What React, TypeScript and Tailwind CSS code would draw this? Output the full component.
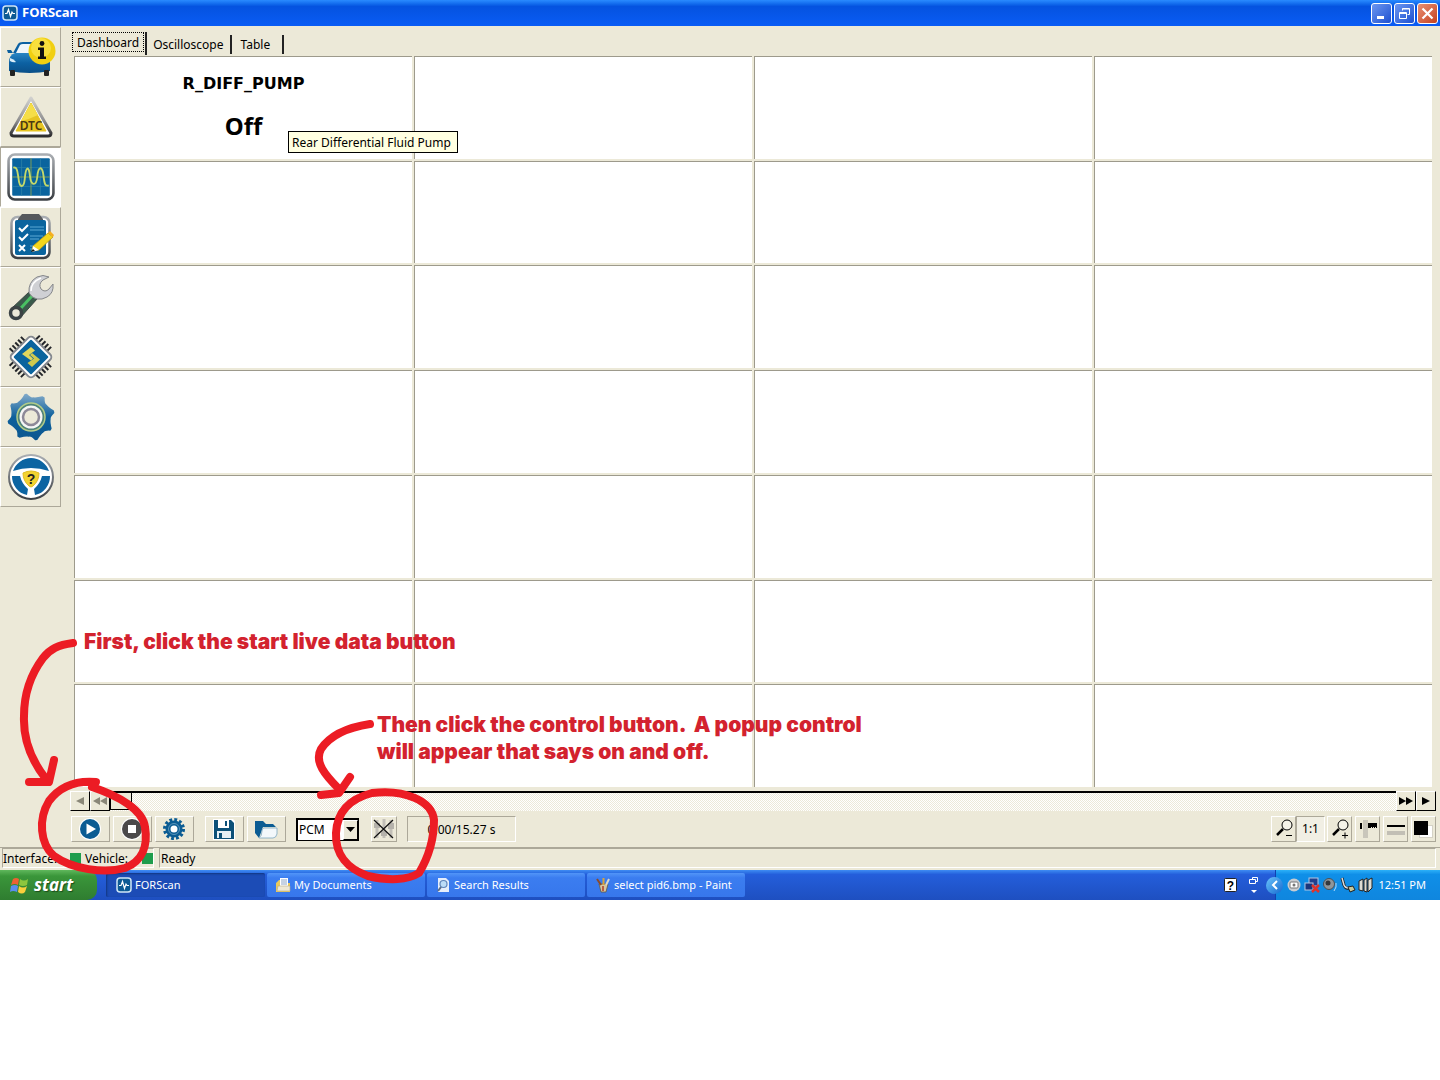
import type { ReactNode } from "react"

const raised = "border border-t-white border-l-white border-r-[#aca899] border-b-[#aca899]"
const sunken = "border border-t-[#aca899] border-l-[#aca899] border-r-white border-b-white"

function CarInfoIcon() {
  return (
    <svg width="50" height="44" viewBox="0 0 50 44">
      <defs>
        <linearGradient id="carBody" x1="0" y1="0" x2="0" y2="1">
          <stop offset="0" stopColor="#2b86c4" />
          <stop offset="0.500" stopColor="#0c61a2" />
          <stop offset="1" stopColor="#0a4f88" />
        </linearGradient>
      </defs>
      <path d="M7 18 L12 9 Q13 7 17 7 H31 Q34 7 36 11 L40 18 Z" fill="#0c61a2" />
      <path d="M10 18 L14 10 Q15 9 17 9 H31 L36 18 Z" fill="#f0f6fa" />
      <path d="M3 36 V27 Q3 20 9 18 H38 Q43 20 44 27 V36 Q24 40 3 36 Z" fill="url(#carBody)" />
      <path d="M4 23 Q8 24 10 27 Q7 28 4 26 Z" fill="#d8ecf8" />
      <path d="M1 15 H5 L7 18 H2 Z" fill="#0b5f9e" />
      <rect x="4" y="35" width="5" height="6" rx="1" fill="#222" />
      <rect x="38" y="35" width="5" height="6" rx="1" fill="#222" />
      <circle cx="36" cy="16" r="13.500" fill="#f1cf10" />
      <circle cx="35" cy="13" r="10" fill="#fff06a" opacity="0.5" />
      <circle cx="36" cy="8.500" r="2.400" fill="#111" />
      <path d="M32 12.500 h6 v9 h2 v2.500 h-8 v-2.500 h2 v-6.500 h-2 Z" fill="#111" />
    </svg>
  )
}

function DtcIcon() {
  return (
    <svg width="46" height="44" viewBox="0 0 46 44">
      <defs>
        <linearGradient id="dtcEdge" x1="0" y1="0" x2="0" y2="1">
          <stop offset="0" stopColor="#d0d0ce" />
          <stop offset="0.600" stopColor="#8f8f8f" />
          <stop offset="1" stopColor="#2d2d2f" />
        </linearGradient>
      </defs>
      <path d="M23 3 L43 38 Q43 41 40 41 H6 Q3 41 3 38 Z" fill="#fff" stroke="url(#dtcEdge)" strokeWidth="3" strokeLinejoin="round" />
      <path d="M23 8 L38 36 H8 Z" fill="#e6c422" stroke="#e6c422" strokeWidth="1" strokeLinejoin="round" />
      <path d="M23 8 L30 20 Q22 24 13 26 Z" fill="#f5de48" />
      <text x="23" y="35" textAnchor="middle" fontSize="12" fontWeight="600" fontFamily="Noto Sans, sans-serif" fill="#4a3a12">DTC</text>
    </svg>
  )
}

function ScopeIcon() {
  return (
    <svg width="48" height="48" viewBox="0 0 46 46">
      <defs>
        <linearGradient id="frameEdge" x1="0" y1="0" x2="0" y2="1">
          <stop offset="0" stopColor="#a9adb2" />
          <stop offset="1" stopColor="#3c4045" />
        </linearGradient>
      </defs>
      <rect x="1.500" y="1.500" width="43" height="43" rx="6" fill="#fff" stroke="url(#frameEdge)" strokeWidth="2.500" />
      <rect x="5" y="5" width="36" height="36" rx="1" fill="#0a649e" />
      <path d="M5 14 H41 M5 32 H41 M14 5 V41 M32 5 V41" stroke="#2f83a8" strokeWidth="0.700" />
      <path d="M23 5 V41 M5 23 H41" stroke="#93a64a" strokeWidth="0.800" />
      <path d="M6 14 C10 13 10 18 11 24 C12 34 16 34 17 25 C18 12 21 12 22 22 C23 32 28 32 29 23 C30 12 34 12 35 22 C36 31 37 32 40 31" fill="none" stroke="#c4d96a" strokeWidth="1.800" />
    </svg>
  )
}

function ChecklistIcon() {
  return (
    <svg width="46" height="48" viewBox="0 0 46 48">
      <rect x="3.500" y="4" width="38" height="41" rx="6" fill="#fff" stroke="url(#frameEdge)" strokeWidth="2.500" />
      <rect x="7" y="7" width="31" height="35" rx="2" fill="#0a649e" />
      <path d="M10 6 L14 1 H31 L35 6 V7 H10 Z" fill="#55585c" />
      <path d="M11 15 l3 3 l6-6 M11 24 l3 3 l6-6 M11 32 l6 6 m0-6 l-6 6" fill="none" stroke="#fff" strokeWidth="2" />
      <path d="M22 14 H36 M22 17 H36 M22 23 H35 M22 26 H31 M22 33 H28 M22 36 H26" stroke="#5aa7d4" strokeWidth="1.200" />
      <path d="M25 33 L40 20 L45 24 L31 37 L24 38 Z" fill="#f5d61c" stroke="#bd9a12" strokeWidth="0.800" />
      <path d="M40 20 L42 18 L46 22 L45 24 Z" fill="#f7ae20" />
      <path d="M25 33 L31 37 L24 39 Z" fill="#fff" />
      <path d="M23 39 l2-3 l2 2 Z" fill="#111" />
    </svg>
  )
}

function WrenchIcon() {
  return (
    <svg width="48" height="48" viewBox="0 0 48 48">
      <path d="M4 36 L22 19 L30 26 L13 45 Z" fill="#3a5a4b" stroke="#3c4544" strokeWidth="1" />
      <path d="M14 35 L25 23" stroke="#49bf63" strokeWidth="3" />
      <path d="M22 20 Q21 9 30 4 Q36 1 42 4 L36 7 Q31 11 34 16 Q38 20 42 16 L46 11 Q47 20 40 24 Q35 27 30 26 Q25 25 22 20 Z" fill="#cfd0d4" stroke="#85878a" strokeWidth="1" />
      <path d="M24 18 Q24 9 34 5" fill="none" stroke="#fff" strokeWidth="1.500" />
      <circle cx="9" cy="40" r="5.500" fill="#ece9d8" stroke="#3b4345" strokeWidth="3.500" />
    </svg>
  )
}

function ChipIcon() {
  return (
    <svg width="48" height="48" viewBox="0 0 48 48">
      <g stroke="#24262a" strokeWidth="6" strokeDasharray="2 2">
        <path d="M4 18 L18 4" />
        <path d="M30 4 L44 18" />
        <path d="M4 30 L18 44" />
        <path d="M30 44 L44 30" />
      </g>
      <rect x="8.500" y="8.500" width="31" height="31" rx="4" transform="rotate(45 24 24)" fill="#fff" stroke="#85898f" strokeWidth="2" />
      <rect x="11.500" y="11.500" width="25" height="25" rx="1" transform="rotate(45 24 24)" fill="#0a649e" />
      <path d="M28 19 L24 15.500 L17 21.500 L21.500 24.500 L25.500 21.500 L31 26.500 L24.500 32.500 L21 29.500" fill="none" stroke="#0a649e" strokeWidth="5" />
      <path d="M24 14 L28 17.500 L22 22 L26 25.500 L24 27.500 L15 21 Z" fill="#e0d65c" />
      <path d="M25 20 L33 26.500 L25 34 L20.500 30 L27 25.500 L23 22 Z" fill="#cfc94e" />
    </svg>
  )
}

// Eight hooked teeth round the centre
const gearPath = Array.from({ length: 8 }, (_, i) => {
  const at = (radius: number, degrees: number) => {
    const angle = ((i * 45 + degrees) * Math.PI) / 180
    return `${(25 + radius * Math.cos(angle)).toFixed(1)} ${(24 + radius * Math.sin(angle)).toFixed(1)}`
  }
  return `${i === 0 ? "M" : "L"}${at(23, -15)} L${at(23, -11)} Q${at(18.5, -2)} ${at(19, 6)} Q${at(19, 16)} ${at(23, 30)}`
}).join(" ")

function GearIcon() {
  return (
    <svg width="50" height="48" viewBox="0 0 50 48">
      <defs>
        <linearGradient id="gearFill" x1="0" y1="0" x2="0" y2="1">
          <stop offset="0" stopColor="#7fa8c8" />
          <stop offset="0.500" stopColor="#0d609c" />
          <stop offset="1" stopColor="#0b5790" />
        </linearGradient>
      </defs>
      <path d={`${gearPath} Z`} fill="url(#gearFill)" stroke="url(#gearFill)" strokeWidth="1.500" strokeLinejoin="round" />
      <circle cx="25" cy="24" r="14" fill="#4f8377" stroke="#b2cc89" strokeWidth="1.500" />
      <circle cx="25" cy="24" r="11.500" fill="#f6f6f6" />
      <circle cx="25" cy="24" r="8" fill="#ece9d8" stroke="#8d8998" strokeWidth="2.500" />
    </svg>
  )
}

function WheelIcon() {
  return (
    <svg width="48" height="48" viewBox="0 0 48 48">
      <circle cx="24" cy="24" r="22" fill="#fff" stroke="url(#frameEdge)" strokeWidth="2" />
      <path d="M6 18 A19 19 0 0 1 42 18 Q33 15 24 15 Q15 15 6 18 Z" fill="#0c64a2" />
      <path d="M5 23 L13 23 Q15 31 21 36 L20 42 A19 19 0 0 1 5 23 Z" fill="#0c64a2" />
      <path d="M43 23 L35 23 Q33 31 27 36 L28 42 A19 19 0 0 0 43 23 Z" fill="#0c64a2" />
      <path d="M16 20 Q24 16 32 20 Q32 28 26 33 Q24 35 22 33 Q16 28 16 20 Z" fill="#f2d331" stroke="#e0bd25" />
      <text x="24" y="31" textAnchor="middle" fontSize="14" fontWeight="700" fontFamily="Liberation Sans, sans-serif" fill="#222">?</text>
    </svg>
  )
}

function PulseIcon() {
  return (
    <svg width="16" height="16" viewBox="0 0 16 16" className="shrink-0">
      <rect x="1" y="1" width="14" height="14" rx="3" fill="#0d5a94" stroke="#cfe6f6" strokeWidth="1.500" />
      <path d="M3 8.500 H5 L6.500 4.500 L8.500 11.500 L10 7 L11 8.500 H13" fill="none" stroke="#fff" strokeWidth="1.200" />
    </svg>
  )
}

const tools = [
  { name: "Vehicle information", icon: <CarInfoIcon /> },
  { name: "Trouble codes", icon: <DtcIcon /> },
  { name: "Live data", icon: <ScopeIcon />, active: true },
  { name: "Tests", icon: <ChecklistIcon /> },
  { name: "Service", icon: <WrenchIcon /> },
  { name: "Configuration", icon: <ChipIcon /> },
  { name: "Settings", icon: <GearIcon /> },
  { name: "Help", icon: <WheelIcon /> },
]

function Caption({ label, className, children }: { label: string; className: string; children: ReactNode }) {
  return (
    <button aria-label={label} className={`flex size-[21px] items-center justify-center rounded-[3px] border border-white ${className}`}>
      {children}
    </button>
  )
}

function TitleBar() {
  return (
    <header className="flex h-[26px] items-center justify-between bg-linear-to-b from-[#2a8bff] via-[#0553e0] via-25% to-[#0a5cf5] px-[2px]">
      <div className="flex items-center gap-1 text-[13px] font-bold text-white">
        <PulseIcon />
        <h1>FORScan</h1>
      </div>
      <div className="flex gap-[2px]">
        <Caption label="Minimize" className="bg-linear-to-br from-[#6d96f0] to-[#1d4fd0]">
          <svg width="15" height="15"><path d="M3 10 h7 v3 h-7 Z" fill="#fff" /></svg>
        </Caption>
        <Caption label="Restore" className="bg-linear-to-br from-[#6d96f0] to-[#1d4fd0]">
          <svg width="15" height="15" fill="none" stroke="#fff">
            <path d="M5.500 4.500 V2.500 H12.500 V8.500 H10.500 M5.500 3 H12.500" />
            <path d="M2.500 6.500 H9.500 V12.500 H2.500 Z M2.500 7.500 H9.500" />
          </svg>
        </Caption>
        <Caption label="Close" className="bg-linear-to-br from-[#e99073] to-[#c5401a]">
          <svg width="15" height="15"><path d="M2.500 2.500 L12.500 12.500 M12.500 2.500 L2.500 12.500" stroke="#fff" strokeWidth="2.200" /></svg>
        </Caption>
      </div>
    </header>
  )
}

function Sidebar() {
  return (
    <nav className="w-[62px] shrink-0">
      {tools.map((tool) => (
        <button
          key={tool.name}
          aria-label={tool.name}
          className={`flex h-[60px] w-[61px] items-center justify-center border ${tool.active ? "border-t-[#aca899] border-r-white border-b-white border-l-[#aca899] bg-white" : "border-t-white border-r-[#aca899] border-b-[#aca899] border-l-white"}`}
        >
          {tool.icon}
        </button>
      ))}
    </nav>
  )
}

function Tabs() {
  return (
    <div role="tablist" className="flex h-[25px] items-start pt-px">
      <div className="flex h-[23px] border-r-2 border-[#222] pr-px pl-[2px]">
        <button role="tab" aria-selected="true" className="h-[20px] border border-dotted border-black px-1 leading-[17px]">Dashboard</button>
      </div>
      <button role="tab" aria-selected="false" className="mt-[3px] h-[19px] border-r-2 border-[#222] pr-[7px] pl-[6px] leading-[19px]">Oscilloscope</button>
      <button role="tab" aria-selected="false" className="mt-[3px] h-[19px] border-r-2 border-[#222] pr-[12px] pl-[8px] leading-[19px]">Table</button>
    </div>
  )
}

function Dashboard() {
  return (
    <div className="mx-1 grid h-[731px] grid-cols-4 grid-rows-7 gap-[2px]">
      {Array.from({ length: 28 }, (_, i) => (
        <div key={i} className="relative border-t border-l border-[#9d9a8c] bg-white">
          {i === 0 && (
            <>
              <div className="pt-4 text-center font-bold">
                <div className="font-['DejaVu_Sans',sans-serif] text-[16px] leading-[22px]">R_DIFF_PUMP</div>
                <div className="mt-[14px] text-[24px] leading-[34px]">Off</div>
              </div>
              <div role="tooltip" className="absolute top-[74px] left-[213px] z-10 h-[22px] w-[170px] border border-black bg-[#ffffe1] px-[3px] leading-[21px] whitespace-nowrap">
                Rear Differential Fluid Pump
              </div>
            </>
          )}
        </div>
      ))}
    </div>
  )
}

function ScrollButton({ label, children, dim }: { label: string; children: ReactNode; dim?: boolean }) {
  return (
    <button
      aria-label={label}
      className={`flex size-[20px] items-center justify-center border border-t-white border-r-black border-b-black border-l-white ${dim ? "text-[#8a8778]" : "text-black"}`}
    >
      <svg width="16" height="10" fill="currentColor">{children}</svg>
    </button>
  )
}

function TimeScroll() {
  return (
    <div className="mt-1 flex h-[20px]">
      <ScrollButton label="Back" dim><path d="M12 1 V9 L4 5 Z" /></ScrollButton>
      <ScrollButton label="Fast back" dim><path d="M8 1 V9 L1 5 Z M15 1 V9 L8 5 Z" /></ScrollButton>
      <div className="flex flex-1 border-t-2 border-black bg-[repeating-conic-gradient(#ece9d8_0_25%,#fff_0_50%)] bg-size-[2px_2px]">
        <div className="h-[17px] w-[22px] border-r border-b border-l border-black bg-[#ece9d8]" />
      </div>
      <ScrollButton label="Fast forward"><path d="M1 1 V9 L8 5 Z M8 1 V9 L15 5 Z" /></ScrollButton>
      <ScrollButton label="Forward"><path d="M4 1 V9 L12 5 Z" /></ScrollButton>
    </div>
  )
}

function ToolButton({ label, className = "w-[39px]", children }: { label: string; className?: string; children: ReactNode }) {
  return (
    <button aria-label={label} className={`flex h-[26px] items-center justify-center ${raised} ${className}`}>
      {children}
    </button>
  )
}

function Magnifier({ plus }: { plus?: boolean }) {
  return (
    <svg width="20" height="20" fill="none" stroke="#000">
      <circle cx="13" cy="6" r="5" fill="#f5f3e8" />
      <path d="M9 10 L3 16" strokeWidth="2.500" />
      <path d={plus ? "M12 16.500 H18 M15 13.500 V19.500" : "M12 16.500 H18"} />
    </svg>
  )
}

function Toolbar() {
  return (
    <div className="mt-1 flex h-[28px] items-center pl-px">
      <div className="flex gap-[3px]">
        <ToolButton label="Start">
          <svg width="24" height="24" viewBox="0 0 24 24">
            <circle cx="11" cy="12" r="11" fill="#fff" />
            <circle cx="11" cy="12" r="10" fill="#0b5c93" />
            <path d="M7.500 6.500 L17 12 L7.500 17.500 Z" fill="#fff" />
          </svg>
        </ToolButton>
        <ToolButton label="Stop">
          <svg width="24" height="24" viewBox="0 0 24 24">
            <circle cx="11" cy="12" r="11" fill="#fff" />
            <circle cx="11" cy="12" r="10" fill="#4b494a" />
            <rect x="7" y="8" width="8" height="8" fill="#fff" />
          </svg>
        </ToolButton>
        <ToolButton label="Configure">
          <svg width="24" height="24" viewBox="0 0 24 24">
            <circle cx="11" cy="12" r="9" fill="none" stroke="#0b5c93" strokeWidth="4" strokeDasharray="2.700 2.012" />
            <circle cx="11" cy="12" r="6" fill="#fff" stroke="#0b5c93" strokeWidth="5" />
            <circle cx="11" cy="12" r="5.500" fill="none" stroke="#6fa3c4" strokeWidth="0.800" />
          </svg>
        </ToolButton>
      </div>
      <div className="ml-[11px] flex gap-[3px]">
        <ToolButton label="Save">
          <svg width="24" height="22" viewBox="0 0 24 22">
            <path d="M0 1 H20 L22 3 V22 H0 Z" fill="#fff" />
            <path d="M1 2 H18 L21 5 V21 H1 Z" fill="#0b5078" />
            <rect x="5" y="1" width="11" height="9" fill="#fff" />
            <rect x="12" y="3" width="2" height="5" fill="#0b5078" />
            <rect x="4" y="13" width="14" height="7" fill="#e4eef4" />
            <rect x="6" y="15" width="3" height="5" fill="#0b5078" />
          </svg>
        </ToolButton>
        <ToolButton label="Open">
          <svg width="24" height="22" viewBox="0 0 24 22">
            <path d="M0 3 H8 L11 6 H18 L21 9 H8 L4 20 L0 15 Z" fill="#0b5c93" />
            <path d="M9 10 H22 V16 Q21 20 18 20 H4 Q7 18 7 13 Q7 10 9 10 Z" fill="#f3f8fb" stroke="#7ca6c0" strokeWidth="0.800" />
          </svg>
        </ToolButton>
      </div>
      <div className="relative ml-[10px]">
        <select aria-label="Module" className="block h-[23px] w-[63px] appearance-none border border-t-2 border-l-2 border-black bg-white pl-px leading-[20px]">
          <option>PCM</option>
        </select>
        <div className="pointer-events-none absolute top-[2px] right-px flex h-[20px] w-[15px] items-center justify-center border border-t-white border-r-black border-b-black border-l-white bg-[#ece9d8]">
          <svg width="9" height="5"><path d="M0 0 H9 L4.500 5 Z" /></svg>
        </div>
      </div>
      <ToolButton label="Control" className="ml-3 w-[26px]">
        <svg width="24" height="24" viewBox="0 0 24 24">
          <path d="M5 3 V21 M12 2 V21 M19 3 V21" stroke="#c2bfb7" strokeWidth="3" />
          <path d="M2 6 H8 V11 H2 Z M9 14 H15 V19 H9 Z M16 6 H22 V12 H16 Z" fill="#b5b2ab" />
          <path d="M2 3 L21 21 M21 3 L2 21" stroke="#111" strokeWidth="1.200" />
        </svg>
      </ToolButton>
      <div className={`ml-[10px] h-[26px] w-[109px] text-center leading-[25px] ${sunken}`}>0.00/15.27 s</div>
      <div className="ml-auto flex">
        <ToolButton label="Zoom out" className="w-[25px]"><Magnifier /></ToolButton>
        <button className={`h-[26px] w-[29px] bg-[#f1efe4] ${sunken}`}>1:1</button>
        <div className="ml-[2px] flex gap-[3px]">
          <ToolButton label="Zoom in" className="w-[25px]"><Magnifier plus /></ToolButton>
          <ToolButton label="Rulers" className="w-[25px]">
            <svg width="21" height="22">
              <rect x="6" y="2" width="5" height="18" fill="#c9c6bb" />
              <path d="M3 5 h2 v6 h-2 Z M11 5 H20 V10 H19 V9 H18 V10 H17 V9 H16 V10 H15 V9 H14 V10 H11 Z" />
            </svg>
          </ToolButton>
          <ToolButton label="Lines" className="w-[25px]">
            <svg width="21" height="22">
              <rect x="2" y="7" width="18" height="2" />
              <rect x="2" y="13" width="18" height="4" fill="#c2bfb5" />
            </svg>
          </ToolButton>
          <ToolButton label="Colors" className="w-[25px]">
            <svg width="21" height="22">
              <rect x="6.500" y="7.500" width="13" height="12" fill="#fff" stroke="#d5d2c6" />
              <rect x="1" y="3" width="14" height="14" />
            </svg>
          </ToolButton>
        </div>
      </div>
    </div>
  )
}

function StatusBar() {
  return (
    <footer className="flex h-[22px] items-start gap-[5px] pr-1 pl-[2px] leading-[19px]">
      <div className={`flex h-[20px] w-[152px] items-center ${sunken}`}>
        <span className="w-[67px]">Interface:</span>
        <span className="size-[11px] bg-[#1f9d4d]" />
        <span className="ml-1 w-[57px]">Vehicle:</span>
        <span className="size-[11px] bg-[#1f9d4d]" />
      </div>
      <div className={`h-[20px] flex-1 pl-px ${sunken}`}>Ready</div>
    </footer>
  )
}

const tasks = [
  { title: "FORScan", icon: <PulseIcon />, active: true },
  {
    title: "My Documents",
    icon: (
      <svg width="16" height="16">
        <path d="M1 6 L4 3 H7 V6 H15 V15 H1 Z" fill="#e9c95c" />
        <path d="M5 1 H13 V9 H5 Z" fill="#fff" />
        <path d="M6 3 H12 M6 5 H12 M6 7 H12" stroke="#8ba5c8" />
        <path d="M3 9 H15 V14 H2 Z" fill="#eee8d4" stroke="#b1a78a" strokeWidth="0.600" />
      </svg>
    ),
  },
  {
    title: "Search Results",
    icon: (
      <svg width="16" height="16">
        <path d="M3 1 H11 L14 4 V15 H3 Z" fill="#e6eefb" />
        <circle cx="8.500" cy="7" r="3.500" fill="#bcdcf7" stroke="#5f85ba" strokeWidth="1.200" />
        <path d="M6 10 L3 14" stroke="#5f6f88" strokeWidth="2" />
      </svg>
    ),
  },
  {
    title: "select pid6.bmp - Paint",
    icon: (
      <svg width="16" height="16">
        <path d="M4 7 H13 L11 15 H6 Z" fill="#d6c59e" stroke="#5e5548" strokeWidth="0.800" />
        <path d="M6 8 L2 2" stroke="#8c4a2a" strokeWidth="2" />
        <path d="M8.500 8 V1" stroke="#d9a53a" strokeWidth="2" />
        <path d="M11 8 L14 2" stroke="#ded8c8" strokeWidth="2" />
        <path d="M8 9 V14" stroke="#b03a25" strokeWidth="1.500" />
      </svg>
    ),
  },
]

function Taskbar() {
  return (
    <div className="flex h-[30px] items-stretch bg-linear-to-b from-[#3f8cf3] via-[#245edb] via-15% to-[#1e4fc0] text-[11px] text-white">
      <button className="flex w-[97px] items-center gap-[5px] rounded-r-[10px] bg-linear-to-b from-[#5fb85c] via-[#3a963a] via-20% to-[#2f7d30] pl-[10px] font-['Open_Sans',sans-serif] text-[17px] font-bold italic [text-shadow:1px_1px_1px_#1a4d1a]">
        <svg width="19" height="19" viewBox="0 0 19 19">
          <path d="M3 3 Q6 1 9 3 L8 9 Q5 7 1 9 Z" fill="#ee6133" />
          <path d="M10 3 Q14 6 18 3 L17 9 Q13 11 9 9 Z" fill="#8cc63e" />
          <path d="M1 10 Q5 8 8 10 L7 16 Q3 14 0 16 Z" fill="#5b8df0" />
          <path d="M9 10 Q13 13 17 10 L15 16 Q12 19 8 16 Z" fill="#f9cf3c" />
        </svg>
        start
      </button>
      <div className="ml-[9px] flex gap-[2px] py-[3px]">
        {tasks.map((task) => (
          <button
            key={task.title}
            className={`flex w-[158px] items-center gap-[3px] rounded-[2px] pl-2 first:w-[159px] first:pl-[10px] ${task.active ? "bg-[#1c4cb6] shadow-[inset_1px_1px_2px_#12357f]" : "bg-linear-to-b from-[#5295f8] via-[#3b7df0] via-20% to-[#3777ec]"}`}
          >
            {task.icon}
            <span>{task.title}</span>
          </button>
        ))}
      </div>
      <div className="ml-auto flex items-center gap-[11px] pr-4">
        <svg width="14" height="15" aria-label="Help">
          <rect x="0.500" y="0.500" width="12" height="13" rx="1" fill="#fff" stroke="#222" />
          <text x="6.500" y="12" textAnchor="middle" fontSize="12" fontWeight="700" fontFamily="Liberation Sans, sans-serif">?</text>
        </svg>
        <svg width="10" height="18" fill="none" stroke="#fff">
          <path d="M3.500 3.500 V1.500 H8.500 V5.500 H6.500 M0.500 3.500 H6.500 V7.500 H0.500 Z" />
          <path d="M2 14 H8 L5 17 Z" fill="#fff" stroke="none" />
        </svg>
      </div>
      <div className="relative flex items-center gap-[2px] border-l border-[#1042af] bg-linear-to-b from-[#2bb0f8] via-[#0f8fe8] via-15% to-[#0f86de] pr-[14px] pl-[10px]">
        <button aria-label="Show hidden icons" className="absolute -left-[10px] flex size-[17px] items-center justify-center rounded-full bg-linear-to-br from-[#6bc4fb] to-[#1268cf]">
          <svg width="8" height="10"><path d="M6 1 L2 5 L6 9" fill="none" stroke="#fff" strokeWidth="2" /></svg>
        </button>
        <svg width="16" height="16">
          <circle cx="8" cy="8" r="6.500" fill="#c9ccd0" />
          <rect x="4" y="5" width="8" height="6" rx="1" fill="#fff" stroke="#777" />
          <circle cx="8" cy="8" r="1.500" fill="#777" />
        </svg>
        <svg width="16" height="16">
          <rect x="5" y="1" width="9" height="8" fill="#21408e" stroke="#b4c5e2" />
          <rect x="1" y="6" width="8" height="7" fill="#1a357c" stroke="#b4c5e2" />
          <path d="M8 8 L15 15 M15 8 L8 15" stroke="#e0322b" strokeWidth="2.500" />
        </svg>
        <svg width="16" height="16">
          <circle cx="7" cy="7" r="5.500" fill="#8f969b" stroke="#4b5054" />
          <circle cx="6" cy="6" r="2.500" fill="#33383d" />
          <path d="M12 14 Q15 10 14 6" fill="none" stroke="#b4dcf8" />
        </svg>
        <svg width="16" height="16">
          <path d="M2 1 L4 8 Q5 12 9 11" fill="none" stroke="#222" strokeWidth="3" />
          <path d="M2 1 L4 8 Q5 11 9 11" fill="none" stroke="#ddd" strokeWidth="1.500" />
          <path d="M8 10 L13 9 L15 13 L10 15 Z" fill="#c5c99a" stroke="#222" />
        </svg>
        <svg width="16" height="16">
          <path d="M1 4 L5 2 V14 L1 13 Z M6 3 L9 1 V15 L6 14 Z M10 3 L14 1 V11 L10 15 Z" fill="#dcdcd4" stroke="#222" />
        </svg>
        <span className="ml-[2px]">12:51 PM</span>
      </div>
    </div>
  )
}

// Hand-drawn notes lie over the whole window
function Notes() {
  return (
    <div className="pointer-events-none absolute inset-0 font-['Inter','Liberation_Sans',sans-serif] text-[21px] leading-[27px] font-black text-[#d3222e]">
      <svg width="480" height="900" fill="none" stroke="#ec1c24" strokeWidth="8" strokeLinecap="round" strokeLinejoin="round" className="absolute top-0 left-0">
        <path d="M73 643 C58 645 50 649 43 658 C31 674 24 695 24 716 C23 740 31 760 46 779" />
        <path d="M54 760 L49 782 L29 782" />
        <path d="M96 782 C73 780 58 789 49 801 C38 819 40 844 54 856 C72 869 104 874 125 868 C143 861 148 845 145 827 C143 810 119 796 92 787" />
        <path d="M370 724 C350 727 331 734 321 749 C314 762 325 775 339 789" />
        <path d="M350 777 L339 793 L321 795" />
        <path d="M372 793 C349 799 337 813 336 833 C335 855 348 869 368 876 C389 881 408 880 419 873 C428 858 434 839 434 820 C432 801 405 789 372 793 Z" />
      </svg>
      <p className="absolute top-[628px] left-[84px] whitespace-nowrap">First, click the start live data button</p>
      <p className="absolute top-[711px] left-[377px] whitespace-pre">{"Then click the control button.  A popup control\nwill appear that says on and off."}</p>
    </div>
  )
}

export default function App() {
  return (
    <div className="min-h-screen bg-white">
      <div className="relative bg-[#ece9d8] font-['Noto_Sans',sans-serif] text-[12px] text-black">
        <TitleBar />
        <div className="flex pt-px">
          <Sidebar />
          <main className="min-w-0 flex-1 pr-1 pl-2">
            <div className="pt-1">
              <Tabs />
            </div>
            <Dashboard />
            <TimeScroll />
            <Toolbar />
          </main>
        </div>
        <div className="mt-1 border-t border-[#aca899]">
          <StatusBar />
        </div>
        <Taskbar />
        <Notes />
      </div>
    </div>
  )
}
